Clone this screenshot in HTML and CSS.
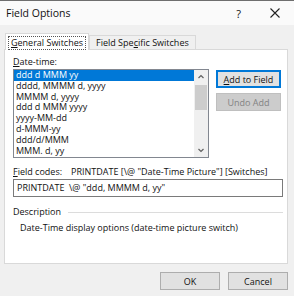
FILE: index.html
```html
<!DOCTYPE html>
<html lang="en">
<head>
  <meta charset="UTF-8">
  <link rel="stylesheet" href="styles.css">
  <title>Field Options</title>
</head>
<body>
  <div class="dialog">
    <header class="titlebar">
      <span class="title">Field Options</span>
      <span class="help">?</span>
      <svg class="close" width="10" height="10" viewBox="0 0 10 10">
        <path d="M0.5 0.5 L9.5 9.5 M9.5 0.5 L0.5 9.5" stroke="#222" stroke-width="1.1" fill="none"/>
      </svg>
    </header>

    <div class="tabs">
      <div class="tab active"><span class="focus"><u>G</u>eneral Switches</span></div>
      <div class="tab">Field Spe<u>c</u>ific Switches</div>
    </div>

    <div class="panel">
      <div class="label"><u>D</u>ate-time:</div>
      <div class="row">
        <div class="listbox">
          <div class="items">
            <div class="item selected">ddd d MMM yy</div>
            <div class="item">dddd, MMMM d, yyyy</div>
            <div class="item">MMMM d, yyyy</div>
            <div class="item">ddd d MMM yyyy</div>
            <div class="item">yyyy-MM-dd</div>
            <div class="item">d-MMM-yy</div>
            <div class="item">ddd/d/MMM</div>
            <div class="item">MMM. d, yy</div>
          </div>
          <div class="scrollbar">
            <svg class="arrow" width="14" height="13" viewBox="0 0 14 13">
              <path d="M4.5 8 L7 5.5 L9.5 8" stroke="#606060" stroke-width="1.2" fill="none"/>
            </svg>
            <div class="track"><div class="thumb"></div></div>
            <svg class="arrow" width="14" height="13" viewBox="0 0 14 13">
              <path d="M4.5 5 L7 7.5 L9.5 5" stroke="#606060" stroke-width="1.2" fill="none"/>
            </svg>
          </div>
        </div>
        <div class="side">
          <button class="btn default"><u>A</u>dd to Field</button>
          <button class="btn disabled">Undo Add</button>
        </div>
      </div>

      <div class="codes"><span><u>F</u>ield codes:</span><span>PRINTDATE [\@ "Date-Time Picture"] [Switches]</span></div>
      <div class="input">PRINTDATE&nbsp; \@ "ddd, MMMM d, yy"</div>

      <div class="group">
        <span>Description</span>
        <div class="rule"></div>
      </div>
      <div class="desc">Date-Time display options (date-time picture switch)</div>
    </div>

    <div class="footer">
      <button class="btn">OK</button>
      <button class="btn">Cancel</button>
    </div>
  </div>
</body>
</html>
```

FILE: styles.css
```css
html, body {
  margin: 0;
  padding: 0;
}

body {
  width: 294px;
  height: 296px;
  overflow: hidden;
  font-family: "Open Sans", "Noto Sans", sans-serif;
  font-size: 9px;
  color: #111;
  background: #f0f0f0;
}

.dialog {
  display: flex;
  flex-direction: column;
  height: 296px;
  border-top: 1px solid #6e6e6e;
  box-sizing: border-box;
}

.titlebar {
  display: flex;
  align-items: center;
  height: 24px;
  padding: 0 0 0 6px;
  background: #fafafa;
}

.title {
  flex-grow: 1;
  font-size: 10.5px;
}

.help {
  font-size: 11px;
  margin-right: 29px;
}

.close {
  margin-right: 14px;
}

.tabs {
  display: flex;
  align-items: flex-end;
  margin: 7px 0 0 5px;
  height: 17px;
  white-space: nowrap;
}

.tab {
  box-sizing: border-box;
  height: 14px;
  padding: 0 6px;
  line-height: 13px;
  border: 1px solid #d9d9d9;
  border-bottom: none;
  background: #f0f0f0;
}

.tab.active {
  height: 17px;
  padding: 2px 3px 0;
  background: #fff;
  position: relative;
  top: 1px;
  z-index: 1;
}

.focus {
  display: inline-block;
  padding: 0 2px;
  line-height: 12px;
  outline: 1px dotted #555;
}

.panel {
  box-sizing: border-box;
  margin: 0 6px 0 4px;
  height: 215px;
  padding: 5px 6px 0 8px;
  background: #fff;
  border: 1px solid #d9d9d9;
  white-space: nowrap;
}

.label {
  line-height: 14px;
}

.row {
  display: flex;
  align-items: flex-start;
  column-gap: 7px;
}

.listbox {
  display: flex;
  box-sizing: border-box;
  width: 197px;
  height: 89px;
  border: 1px solid #828790;
}

.items {
  flex-grow: 1;
}

.item {
  height: 10.8px;
  line-height: 10.8px;
  padding-left: 2px;
}

.item.selected {
  background: #0078d7;
  color: #fff;
}

.scrollbar {
  display: flex;
  flex-direction: column;
  width: 14px;
  background: #f0f0f0;
}

.track {
  flex-grow: 1;
  padding: 2px 1px;
}

.thumb {
  height: 25px;
  background: #cdcdcd;
}

.side {
  display: flex;
  flex-direction: column;
  row-gap: 5px;
  margin-top: 1px;
}

.btn {
  box-sizing: border-box;
  font-family: inherit;
  font-size: 9px;
  color: #111;
  height: 18px;
  padding: 0;
  background: #e1e1e1;
  border: 1px solid #adadad;
}

.side .btn {
  width: 65px;
}

.btn.default {
  border: 1px solid #0078d7;
  box-shadow: inset 0 0 0 1px #0078d7;
}

.btn.disabled {
  background: #cccccc;
  border-color: #bfbfbf;
  color: #838383;
}

.codes {
  display: flex;
  column-gap: 9px;
  margin-top: 7px;
  line-height: 13px;
}

.input {
  box-sizing: border-box;
  width: 270px;
  height: 18px;
  margin-top: 1px;
  padding-left: 3px;
  line-height: 16px;
  border: 1px solid #7a7a7a;
}

.group {
  display: flex;
  align-items: center;
  column-gap: 7px;
  margin-top: 8px;
  line-height: 14px;
  width: 270px;
}

.rule {
  flex-grow: 1;
  height: 1px;
  background: #dcdcdc;
}

.desc {
  margin: 2px 0 0 7px;
  line-height: 14px;
}

.footer {
  display: flex;
  justify-content: flex-end;
  column-gap: 8px;
  padding: 8px 6px 0 0;
}

.footer .btn {
  width: 60px;
}
```
